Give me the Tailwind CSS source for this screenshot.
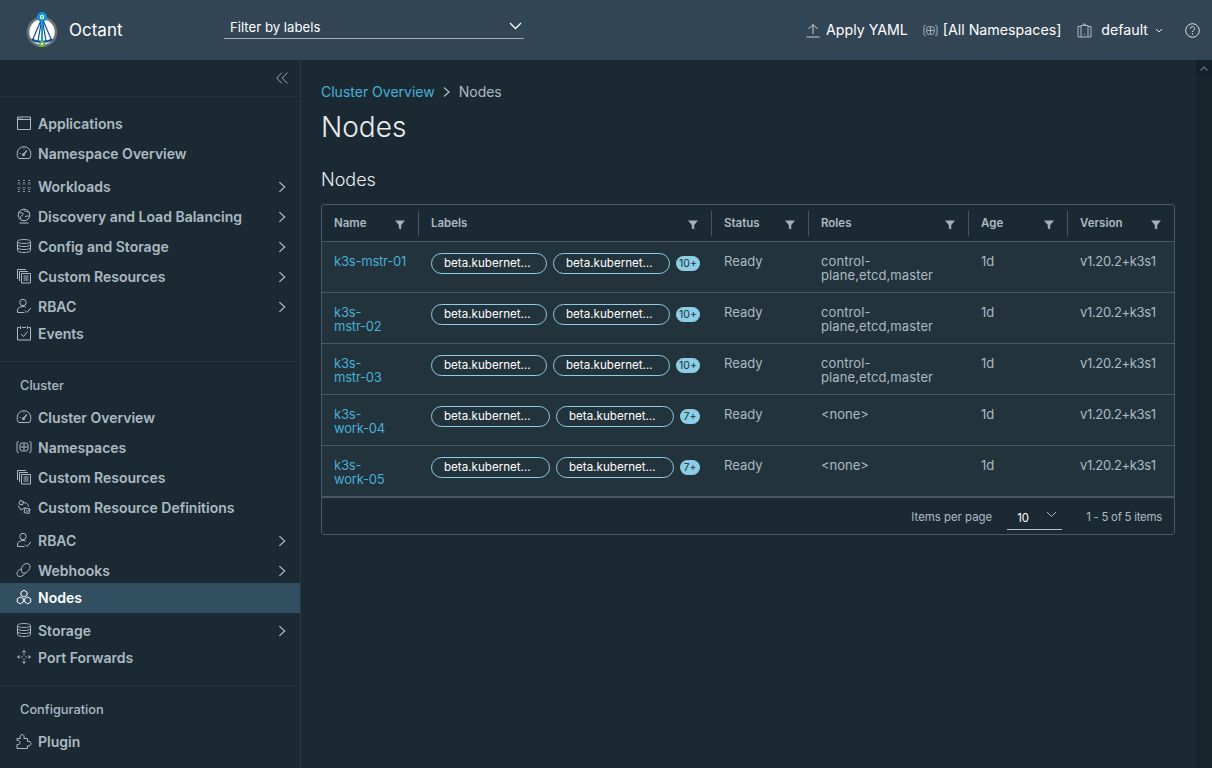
<!DOCTYPE html>
<html lang="en">
<head>
<meta charset="UTF-8">
<title>Octant - Nodes</title>
<script src="https://cdn.jsdelivr.net/npm/@tailwindcss/browser@4"></script>
</head>
<body class="w-[1212px] h-[768px] overflow-hidden bg-[#1b2a32] text-[#acbac3] font-[family-name:Inter,sans-serif]">
<svg class="hidden" xmlns="http://www.w3.org/2000/svg">
<symbol id="i-app" viewBox="0 0 16 16"><path d="M1.500 2h13v12.500h-13zM1.500 4.500h13" fill="none" stroke="currentColor"/><path d="M2.500 3.200h.8M4.200 3.200h.8M5.900 3.200h.8" stroke="currentColor"/></symbol>
<symbol id="i-gauge" viewBox="0 0 16 16"><path d="M3 13.500h10c1 0 1.800-2 1.800-5A6.800 6.800 0 1 0 1.200 8.500c0 3 .8 5 1.800 5z" fill="none" stroke="currentColor"/><path d="M7 10l4-4.500" stroke="currentColor" stroke-width="1.200"/><circle cx="7.500" cy="9.700" r="1.200" fill="none" stroke="currentColor"/><path d="M3.500 8.500h1M8 3.500v1" stroke="currentColor"/></symbol>
<symbol id="i-grid" viewBox="0 0 16 16"><path d="M2 2.500h1.600M7.200 2.500h1.600M12.400 2.500H14M1.500 6h1M3.500 6h1M6.700 6h1M8.500 6h1M11.900 6h1M13.700 6h1M1.500 9.800h1M3.500 9.800h1M6.700 9.800h1M8.500 9.800h1M11.900 9.800h1M13.700 9.800h1M2 13.500h1.600M7.200 13.500h1.600M12.400 13.500H14M3 4v1M8 4v1M13 4v1M3 11v1M8 11v1M13 11v1" stroke="currentColor" fill="none"/></symbol>
<symbol id="i-globe" viewBox="0 0 16 16"><circle cx="8" cy="7" r="5.800" fill="none" stroke="currentColor"/><path d="M3 4.500c2 .5 3 0 4 1s-1 2-2 2.500-.5 2 0 3.300M8 1.500c0 1.500 1 2 2.500 2s3 .5 3 1.500M9 9c1-1 3-1.500 4.500-.5M3.500 15h9" fill="none" stroke="currentColor"/></symbol>
<symbol id="i-db" viewBox="0 0 16 16"><path d="M1.500 3.500C1.500 2.200 4.500 1.500 8 1.500s6.500.7 6.500 2v9c0 1.300-3 2-6.500 2s-6.500-.7-6.500-2zM1.500 3.500c0 1.300 3 2 6.500 2s6.500-.7 6.500-2M1.500 6.500c0 1.300 3 2 6.500 2s6.500-.7 6.500-2M1.500 9.500c0 1.300 3 2 6.500 2s6.500-.7 6.500-2" fill="none" stroke="currentColor"/></symbol>
<symbol id="i-files" viewBox="0 0 16 16"><path d="M1.500 11V1.500H10M3.500 13V3.500H12" fill="none" stroke="currentColor"/><path d="M5.500 5.500h9v9.500h-9zM7.500 8h5M7.500 10h5M7.500 12h5" fill="none" stroke="currentColor"/></symbol>
<symbol id="i-user" viewBox="0 0 16 16"><circle cx="7" cy="4.500" r="3.200" fill="none" stroke="currentColor"/><path d="M1.500 14.500v-2.500c0-2 3-3.500 5.500-3.500 1 0 2 .2 2.800.6M1.500 14.500h7M9 12.500l2 2 3.800-4.500" fill="none" stroke="currentColor"/></symbol>
<symbol id="i-cal" viewBox="0 0 16 16"><path d="M3.500 2.500h-2v12.500h13V2.500h-2M6 2.500h4" fill="none" stroke="currentColor"/><path d="M4.500 1v3M11.500 1v3M5 9l2.500 2.500 4-5" fill="none" stroke="currentColor"/></symbol>
<symbol id="i-ns" viewBox="0 0 16 16"><path d="M3 2.500C1.500 2.500 1 3 1 4v8c0 1 .5 1.500 2 1.500M13 2.500c1.500 0 2 .5 2 1.500v8c0 1-.5 1.500-2 1.500" fill="none" stroke="currentColor"/><rect x="4" y="4" width="8" height="8" rx="2" fill="none" stroke="currentColor"/><path d="M8 4.500v7M4.500 8h7" stroke="currentColor"/></symbol>
<symbol id="i-crd" viewBox="0 0 16 16"><path d="M4 1.500l3.500 1-1 3.500-3.500-1zM9 9l5 1-1 4.500-5-1z" fill="none" stroke="currentColor"/><path d="M2 6.500l3 4.500 4.500-2.500M7 3.500c3 0 5 1 5.500 4M10 11.500l1.500 1 1.500-2" fill="none" stroke="currentColor"/></symbol>
<symbol id="i-hook" viewBox="0 0 16 16"><path d="M6.500 11c-2.500-3-.5-9 4-9.500 2.500-.2 4 1.500 3.500 4-.5 3-4 6.500-7.500 5.500z" fill="none" stroke="currentColor"/><path d="M5 7C2.500 8 .5 10 1 12.500c.5 2 3 2.500 5 1.500 1.500-.7 2.500-1.500 3-2.500" fill="none" stroke="currentColor"/></symbol>
<symbol id="i-nodes" viewBox="0 0 16 16"><path d="M8 1.300l3 1.700v3.400L8 8 5 6.400V3zM4.300 8l3 1.700v3.400l-3 1.700-3-1.700V9.700zM11.700 8l3 1.700v3.400l-3 1.700-3-1.700V9.700z" fill="none" stroke="currentColor" stroke-linejoin="round"/></symbol>
<symbol id="i-port" viewBox="0 0 16 16"><path d="M8 1l2 2.500H6zM8 15l-2-2.500h4zM1 8l2.500-2v4zM15 8l-2.500 2V6z" fill="currentColor"/><path d="M5 8h1.500M9.500 8H11M8 5v1.500M8 9.500V11" stroke="currentColor"/></symbol>
<symbol id="i-plugin" viewBox="0 0 16 16"><path d="M1 5.500h3.500C3.500 4 4 2 6 1.500c2 0 2.800 2 1.800 4h3.700v3c2-.5 3.500.3 3.500 2s-1.500 2.800-3.500 2.300v2.700H1v-4c2 .5 3-.5 3-1.800S3 6.800 1 7.500z" fill="none" stroke="currentColor" stroke-linejoin="round"/></symbol>
<symbol id="i-right" viewBox="0 0 10 16"><path d="M1.500 1.500L8.500 8l-7 6.500" fill="none" stroke="currentColor" stroke-width="1.700"/></symbol>
<symbol id="i-filter" viewBox="0 0 10 10"><path d="M0 .5h10L6.200 5v4.500L3.800 8.200V5z" fill="currentColor"/></symbol>
</svg>

<header class="h-[60px] bg-[#324554] flex items-center text-white">
  <div class="w-[224px] flex items-center pl-[26px] shrink-0">
    <svg class="w-[32px] h-[36px] -mt-[2px]" viewBox="0 0 32 36">
      <circle cx="16" cy="21" r="14" fill="#fff" stroke="#6f7478" stroke-width="2.600"/>
      <path d="M5 29c5 4 17 4 22 0l-1.500-1.500c-5 3-14 3-19 0z" fill="#0f4c92"/>
      <path d="M16 7L6.500 29M16 7L25.500 29M16 7l-4 23M16 7l4 23" stroke="#0f4c92" stroke-width="1.200" fill="none"/>
      <path d="M16 7v26" stroke="#1b9ad6" stroke-width="2"/>
      <circle cx="16" cy="6" r="5" fill="#0a97d9"/><circle cx="16" cy="6" r="2.200" fill="#fff"/><circle cx="16" cy="6" r="1.200" fill="#7bc043"/>
      <circle cx="16" cy="33" r="3" fill="#6db33f"/><circle cx="16" cy="33" r="1" fill="#fff"/>
    </svg>
    <span class="ml-[11px] text-[17px] leading-none">Octant</span>
  </div>
  <div class="w-[300px] h-[20px] -mt-[2px] border-b border-[#a5adb3] flex items-start justify-between pl-[6px] pr-[2px] text-[13.200px] leading-[16px]">
    <span>Filter by labels</span>
    <svg class="w-[13px] h-[8px] mt-[3px]" viewBox="0 0 13 8"><path d="M1 1l5.500 5.500L12 1" fill="none" stroke="#fff" stroke-width="1.300"/></svg>
  </div>
  <div class="ml-auto flex items-center text-[14.200px] leading-none mt-[1px]">
    <svg class="w-[14px] h-[15px] text-[#c9d0d4]" viewBox="0 0 14 15"><path d="M7 11V1.500M2.500 6L7 1.500 11.500 6M0.500 14h13" fill="none" stroke="currentColor"/></svg>
    <span class="ml-[6px]">Apply YAML</span>
    <svg class="ml-[15px] w-[15px] h-[15px] text-[#acbac3]"><use href="#i-ns"/></svg>
    <span class="ml-[5px]">[All Namespaces]</span>
    <svg class="ml-[16px] w-[15px] h-[15px] text-[#acbac3]" viewBox="0 0 15 15"><path d="M4 2.500h7v11.500H4zM4 3.500H1v10.500h3M11 3.500h3v10.500h-3M6.500 2.500V1h2v1.500M7 11.500h1" fill="none" stroke="currentColor"/></svg>
    <span class="ml-[9px]">default</span>
    <svg class="ml-[7px] w-[8px] h-[5px] text-[#dfe3e6]" viewBox="0 0 8 5"><path d="M1 1l3 3 3-3" fill="none" stroke="currentColor"/></svg>
    <svg class="ml-[22px] mr-[12px] w-[15px] h-[15px] text-[#dfe3e6]" viewBox="0 0 15 15"><circle cx="7.500" cy="7.500" r="6.800" fill="none" stroke="currentColor"/><path d="M5.300 5.800c0-1.300 1-2.200 2.200-2.200s2.200.9 2.200 2c0 1.500-2.200 1.700-2.200 3.400" fill="none" stroke="currentColor"/><circle cx="7.500" cy="11" r=".7" fill="currentColor"/></svg>
  </div>
</header>

<div class="flex h-[708px]">
  <aside class="w-[301px] shrink-0 border-r border-[#2a3a45] text-[14px] font-semibold">
    <div class="h-[37px] border-b border-[#22323a] flex justify-end items-start pt-[12px] pr-[12px]">
      <svg class="w-[12px] h-[12px] text-[#9aa8b0]" viewBox="0 0 12 12"><path d="M6 .5L.8 6 6 11.500M11.500 .5L6.300 6l5.200 5.500" fill="none" stroke="currentColor"/></svg>
    </div>
    <nav class="pt-[12px]">
      <a class="h-[30px] pb-[2px] flex items-center pl-[16px]"><svg class="w-[16px] h-[16px] mr-[6px]"><use href="#i-app"/></svg>Applications</a>
      <a class="h-[30px] pb-[2px] flex items-center pl-[16px]"><svg class="w-[16px] h-[16px] mr-[6px]"><use href="#i-gauge"/></svg>Namespace Overview</a>
      <div class="mt-[3px] -mb-[3px]">
        <a class="h-[30px] pb-[2px] flex items-center pl-[16px] pr-[14px]"><svg class="w-[16px] h-[16px] mr-[6px]"><use href="#i-grid"/></svg>Workloads<svg class="ml-auto w-[8px] h-[12px] mt-[2px]"><use href="#i-right"/></svg></a>
        <a class="h-[30px] pb-[2px] flex items-center pl-[16px] pr-[14px]"><svg class="w-[16px] h-[16px] mr-[6px]"><use href="#i-globe"/></svg>Discovery and Load Balancing<svg class="ml-auto w-[8px] h-[12px] mt-[2px]"><use href="#i-right"/></svg></a>
        <a class="h-[30px] pb-[2px] flex items-center pl-[16px] pr-[14px]"><svg class="w-[16px] h-[16px] mr-[6px]"><use href="#i-db"/></svg>Config and Storage<svg class="ml-auto w-[8px] h-[12px] mt-[2px]"><use href="#i-right"/></svg></a>
        <a class="h-[30px] pb-[2px] flex items-center pl-[16px] pr-[14px]"><svg class="w-[16px] h-[16px] mr-[6px]"><use href="#i-files"/></svg>Custom Resources<svg class="ml-auto w-[8px] h-[12px] mt-[2px]"><use href="#i-right"/></svg></a>
        <a class="h-[30px] pb-[2px] flex items-center pl-[16px] pr-[14px]"><svg class="w-[16px] h-[16px] mr-[6px]"><use href="#i-user"/></svg>RBAC<svg class="ml-auto w-[8px] h-[12px] mt-[2px]"><use href="#i-right"/></svg></a>
      </div>
      <a class="h-[30px] pb-[2px] flex items-center pl-[16px]"><svg class="w-[16px] h-[16px] mr-[6px]"><use href="#i-cal"/></svg>Events</a>

      <div class="mt-[12px] border-t border-[#263640] pt-[14px] pb-[7px] pl-[20px] text-[12.800px] leading-[20px] font-medium">Cluster</div>
      <a class="h-[30px] pb-[2px] flex items-center pl-[16px]"><svg class="w-[16px] h-[16px] mr-[6px]"><use href="#i-gauge"/></svg>Cluster Overview</a>
      <a class="h-[30px] pb-[2px] flex items-center pl-[16px]"><svg class="w-[16px] h-[16px] mr-[6px]"><use href="#i-ns"/></svg>Namespaces</a>
      <a class="h-[30px] pb-[2px] flex items-center pl-[16px]"><svg class="w-[16px] h-[16px] mr-[6px]"><use href="#i-files"/></svg>Custom Resources</a>
      <a class="h-[30px] pb-[2px] flex items-center pl-[16px]"><svg class="w-[16px] h-[16px] mr-[6px]"><use href="#i-crd"/></svg>Custom Resource Definitions</a>
      <div class="mt-[3px] -mb-[3px]">
        <a class="h-[30px] pb-[2px] flex items-center pl-[16px] pr-[14px]"><svg class="w-[16px] h-[16px] mr-[6px]"><use href="#i-user"/></svg>RBAC<svg class="ml-auto w-[8px] h-[12px] mt-[2px]"><use href="#i-right"/></svg></a>
        <a class="h-[30px] pb-[2px] flex items-center pl-[16px] pr-[14px]"><svg class="w-[16px] h-[16px] mr-[6px]"><use href="#i-hook"/></svg>Webhooks<svg class="ml-auto w-[8px] h-[12px] mt-[2px]"><use href="#i-right"/></svg></a>
      </div>
      <a class="h-[30px] pb-[2px] flex items-center pl-[16px] bg-[#324f61] text-white"><svg class="w-[16px] h-[16px] mr-[6px]"><use href="#i-nodes"/></svg>Nodes</a>
      <div class="mt-[3px] -mb-[3px]">
        <a class="h-[30px] pb-[2px] flex items-center pl-[16px] pr-[14px]"><svg class="w-[16px] h-[16px] mr-[6px]"><use href="#i-db"/></svg>Storage<svg class="ml-auto w-[8px] h-[12px] mt-[2px]"><use href="#i-right"/></svg></a>
      </div>
      <a class="h-[30px] pb-[2px] flex items-center pl-[16px]"><svg class="w-[16px] h-[16px] mr-[6px]"><use href="#i-port"/></svg>Port Forwards</a>

      <div class="mt-[12px] border-t border-[#263640] pt-[14px] pb-[7px] pl-[20px] text-[12.800px] leading-[20px] font-medium">Configuration</div>
      <a class="h-[30px] pb-[2px] flex items-center pl-[16px]"><svg class="w-[16px] h-[16px] mr-[6px]"><use href="#i-plugin"/></svg>Plugin</a>
    </nav>
  </aside>

  <main class="flex-1 pl-[20px] pr-[21px] pt-[24px]">
    <div class="h-[16px] flex items-center text-[14px] leading-none">
      <span class="text-[#49afd9]">Cluster Overview</span>
      <svg class="ml-[8px] mr-[9px] w-[7px] h-[10px]" viewBox="0 0 7 10"><path d="M1 .5L6 5 1 9.500" fill="none" stroke="#acbac3" stroke-width="1.300"/></svg>
      <span>Nodes</span>
    </div>
    <h1 class="mt-[9px] text-[28px] leading-[36px] font-light text-[#eaedf0]">Nodes</h1>
    <h2 class="mt-[23px] text-[18px] leading-[24px] font-light text-[#eaedf0]">Nodes</h2>

    <section class="mt-[12px] w-[854px] border border-[#485864] rounded-[3px] text-[13px] leading-[14px]">
      <div class="h-[36px] grid grid-cols-[97px_293px_97px_160px_99px_1fr] text-[11.500px] font-semibold">
        <div class="flex items-start pt-[6px]"><div class="h-[25px] w-full border-r border-[#485864] flex justify-between pl-[12px] pr-[13px] pt-[5px]"><span>Name</span><svg class="w-[10px] h-[10px] mt-[4px] text-[#a9b0b5]"><use href="#i-filter"/></svg></div></div>
        <div class="flex items-start pt-[6px]"><div class="h-[25px] w-full border-r border-[#485864] flex justify-between pl-[12px] pr-[13px] pt-[5px]"><span>Labels</span><svg class="w-[10px] h-[10px] mt-[4px] text-[#a9b0b5]"><use href="#i-filter"/></svg></div></div>
        <div class="flex items-start pt-[6px]"><div class="h-[25px] w-full border-r border-[#485864] flex justify-between pl-[12px] pr-[13px] pt-[5px]"><span>Status</span><svg class="w-[10px] h-[10px] mt-[4px] text-[#a9b0b5]"><use href="#i-filter"/></svg></div></div>
        <div class="flex items-start pt-[6px]"><div class="h-[25px] w-full border-r border-[#485864] flex justify-between pl-[12px] pr-[13px] pt-[5px]"><span>Roles</span><svg class="w-[10px] h-[10px] mt-[4px] text-[#a9b0b5]"><use href="#i-filter"/></svg></div></div>
        <div class="flex items-start pt-[6px]"><div class="h-[25px] w-full border-r border-[#485864] flex justify-between pl-[12px] pr-[13px] pt-[5px]"><span>Age</span><svg class="w-[10px] h-[10px] mt-[4px] text-[#a9b0b5]"><use href="#i-filter"/></svg></div></div>
        <div class="flex items-start pt-[6px]"><div class="h-[25px] w-full flex justify-between pl-[12px] pr-[13px] pt-[5px]"><span>Version</span><svg class="w-[10px] h-[10px] mt-[4px] text-[#a9b0b5]"><use href="#i-filter"/></svg></div></div>
      </div>

      <div class="h-[51px] border-t border-[#485864] bg-[#22333c] grid grid-cols-[97px_293px_97px_160px_99px_1fr] pt-[12px]">
        <div class="pl-[12px] pr-[10px] text-[#49afd9] tracking-[-0.2px]">k3s-mstr-01</div>
        <div class="pl-[12px] -mt-[1px] flex items-start text-white text-[11.600px]">
          <span class="w-[116px] h-[21px] border border-[#8bcee6] rounded-full pl-[12px] leading-[18px]">beta.kubernet…</span>
          <span class="ml-[6px] w-[117px] h-[21px] border border-[#8bcee6] rounded-full pl-[12px] leading-[18px]">beta.kubernet…</span>
          <span class="ml-[6px] mt-[3px] w-[24px] h-[15px] rounded-full bg-[#8bcee6] text-[#22333c] text-[10.500px] leading-[15px] text-center">10+</span>
        </div>
        <div class="pl-[12px]">Ready</div>
        <div class="pl-[12px] tracking-[0.1px]">control-<br>plane,etcd,master</div>
        <div class="pl-[12px]">1d</div>
        <div class="pl-[12px] tracking-[-0.33px]">v1.20.2+k3s1</div>
      </div>
      <div class="h-[51px] border-t border-[#485864] bg-[#22333c] grid grid-cols-[97px_293px_97px_160px_99px_1fr] pt-[12px]">
        <div class="pl-[12px] pr-[10px] text-[#49afd9] tracking-[-0.2px]">k3s-<br>mstr-02</div>
        <div class="pl-[12px] -mt-[1px] flex items-start text-white text-[11.600px]">
          <span class="w-[116px] h-[21px] border border-[#8bcee6] rounded-full pl-[12px] leading-[18px]">beta.kubernet…</span>
          <span class="ml-[6px] w-[117px] h-[21px] border border-[#8bcee6] rounded-full pl-[12px] leading-[18px]">beta.kubernet…</span>
          <span class="ml-[6px] mt-[3px] w-[24px] h-[15px] rounded-full bg-[#8bcee6] text-[#22333c] text-[10.500px] leading-[15px] text-center">10+</span>
        </div>
        <div class="pl-[12px]">Ready</div>
        <div class="pl-[12px] tracking-[0.1px]">control-<br>plane,etcd,master</div>
        <div class="pl-[12px]">1d</div>
        <div class="pl-[12px] tracking-[-0.33px]">v1.20.2+k3s1</div>
      </div>
      <div class="h-[51px] border-t border-[#485864] bg-[#22333c] grid grid-cols-[97px_293px_97px_160px_99px_1fr] pt-[12px]">
        <div class="pl-[12px] pr-[10px] text-[#49afd9] tracking-[-0.2px]">k3s-<br>mstr-03</div>
        <div class="pl-[12px] -mt-[1px] flex items-start text-white text-[11.600px]">
          <span class="w-[116px] h-[21px] border border-[#8bcee6] rounded-full pl-[12px] leading-[18px]">beta.kubernet…</span>
          <span class="ml-[6px] w-[117px] h-[21px] border border-[#8bcee6] rounded-full pl-[12px] leading-[18px]">beta.kubernet…</span>
          <span class="ml-[6px] mt-[3px] w-[24px] h-[15px] rounded-full bg-[#8bcee6] text-[#22333c] text-[10.500px] leading-[15px] text-center">10+</span>
        </div>
        <div class="pl-[12px]">Ready</div>
        <div class="pl-[12px] tracking-[0.1px]">control-<br>plane,etcd,master</div>
        <div class="pl-[12px]">1d</div>
        <div class="pl-[12px] tracking-[-0.33px]">v1.20.2+k3s1</div>
      </div>
      <div class="h-[51px] border-t border-[#485864] bg-[#22333c] grid grid-cols-[97px_293px_97px_160px_99px_1fr] pt-[12px]">
        <div class="pl-[12px] pr-[10px] text-[#49afd9] tracking-[-0.2px]">k3s-<br>work-04</div>
        <div class="pl-[12px] -mt-[1px] flex items-start text-white text-[11.600px]">
          <span class="w-[119px] h-[21px] border border-[#8bcee6] rounded-full pl-[12px] leading-[18px]">beta.kubernet…</span>
          <span class="ml-[6px] w-[118px] h-[21px] border border-[#8bcee6] rounded-full pl-[12px] leading-[18px]">beta.kubernet…</span>
          <span class="ml-[6px] mt-[3px] w-[20px] h-[15px] rounded-full bg-[#8bcee6] text-[#22333c] text-[10.500px] leading-[15px] text-center">7+</span>
        </div>
        <div class="pl-[12px]">Ready</div>
        <div class="pl-[12px]">&lt;none&gt;</div>
        <div class="pl-[12px]">1d</div>
        <div class="pl-[12px] tracking-[-0.33px]">v1.20.2+k3s1</div>
      </div>
      <div class="h-[51px] border-t border-[#485864] bg-[#22333c] grid grid-cols-[97px_293px_97px_160px_99px_1fr] pt-[12px]">
        <div class="pl-[12px] pr-[10px] text-[#49afd9] tracking-[-0.2px]">k3s-<br>work-05</div>
        <div class="pl-[12px] -mt-[1px] flex items-start text-white text-[11.600px]">
          <span class="w-[119px] h-[21px] border border-[#8bcee6] rounded-full pl-[12px] leading-[18px]">beta.kubernet…</span>
          <span class="ml-[6px] w-[118px] h-[21px] border border-[#8bcee6] rounded-full pl-[12px] leading-[18px]">beta.kubernet…</span>
          <span class="ml-[6px] mt-[3px] w-[20px] h-[15px] rounded-full bg-[#8bcee6] text-[#22333c] text-[10.500px] leading-[15px] text-center">7+</span>
        </div>
        <div class="pl-[12px]">Ready</div>
        <div class="pl-[12px]">&lt;none&gt;</div>
        <div class="pl-[12px]">1d</div>
        <div class="pl-[12px] tracking-[-0.33px]">v1.20.2+k3s1</div>
      </div>

      <div class="h-[38px] border-t-2 border-[#485864] flex items-center justify-end pr-[12px] text-[11.400px]">
        <span class="mt-[2px]">Items per page</span>
        <div class="ml-[15px] w-[55px] h-[24px] mt-[3px] border-b border-[#b8c2c8] flex items-start justify-between pl-[10px] pr-[5px] pt-[5px] text-white">
          <span>10</span>
          <svg class="w-[11px] h-[7px] text-[#acbac3]" viewBox="0 0 11 7"><path d="M1 1l4.500 4.500L10 1" fill="none" stroke="currentColor"/></svg>
        </div>
        <span class="ml-[24px] mt-[2px] tracking-[-0.25px]">1 - 5 of 5 items</span>
      </div>
    </section>
  </main>

  <div class="w-[16px] shrink-0 bg-[#17242b]">
    <div class="h-[16px] bg-[#14202a] flex items-center justify-center">
      <svg class="w-[8px] h-[5px] text-[#5c666c]" viewBox="0 0 8 5"><path d="M.5 4.500L4 1l3.500 3.500" fill="none" stroke="currentColor" stroke-width="1.500"/></svg>
    </div>
  </div>
</div>
</body>
</html>
